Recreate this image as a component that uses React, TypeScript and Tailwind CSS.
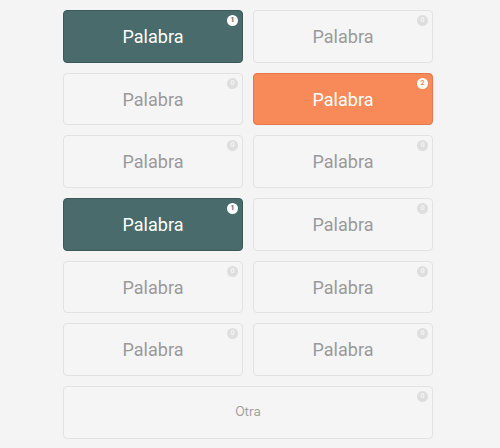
import React from 'react';
import { clsx } from 'clsx';

type Word = { label: string; count: number; tone?: 'teal' | 'orange' };

const WORDS: Word[] = [
  { label: 'Palabra', count: 1, tone: 'teal' },
  { label: 'Palabra', count: 0 },
  { label: 'Palabra', count: 0 },
  { label: 'Palabra', count: 2, tone: 'orange' },
  { label: 'Palabra', count: 0 },
  { label: 'Palabra', count: 0 },
  { label: 'Palabra', count: 1, tone: 'teal' },
  { label: 'Palabra', count: 0 },
  { label: 'Palabra', count: 0 },
  { label: 'Palabra', count: 0 },
  { label: 'Palabra', count: 0 },
  { label: 'Palabra', count: 0 },
];

function Badge({ count, tone }: { count: number; tone?: Word['tone'] }) {
  return (
    <span
      className={clsx(
        'absolute top-[4px] right-[4px] w-[11px] h-[11px] rounded-full flex items-center justify-center text-[7px] font-bold leading-none font-[Roboto,sans-serif]',
        tone === 'teal' && 'bg-white text-[#4a6b6b]',
        tone === 'orange' && 'bg-white text-[#f58a58]',
        !tone && 'bg-[#dedede] text-[#f4f4f4]'
      )}
    >
      {count}
    </span>
  );
}

function WordCard({ label, count, tone }: Word) {
  return (
    <button
      className={clsx(
        'relative h-[52.7px] rounded-[4px] border flex items-center justify-center text-[18px] font-[Roboto,sans-serif]',
        tone === 'teal' && 'bg-[#4a6b6b] border-[#3b5858] text-white',
        tone === 'orange' && 'bg-[#f78a58] border-[#e7774a] text-white',
        !tone && 'bg-[#f5f5f5] border-[#e2e2e2] text-[#9a9a9a]'
      )}
    >
      {label}
      <Badge count={count} tone={tone} />
    </button>
  );
}

export default function App() {
  return (
    <div className="min-h-[448px] bg-[#f4f4f4]">
      <div className="w-[370px] ml-[63px] pt-[10px] grid grid-cols-2 gap-x-[10px] gap-y-[10px]">
        {WORDS.map((w, i) => (
          <WordCard key={i} {...w} />
        ))}
        <button className="relative col-span-2 h-[52.7px] rounded-[4px] border border-[#e2e2e2] bg-[#f5f5f5] flex items-center justify-center text-[12.5px] text-[#a0a0a0] font-[Inter,sans-serif]">
          Otra
          <Badge count={0} />
        </button>
      </div>
    </div>
  );
}
